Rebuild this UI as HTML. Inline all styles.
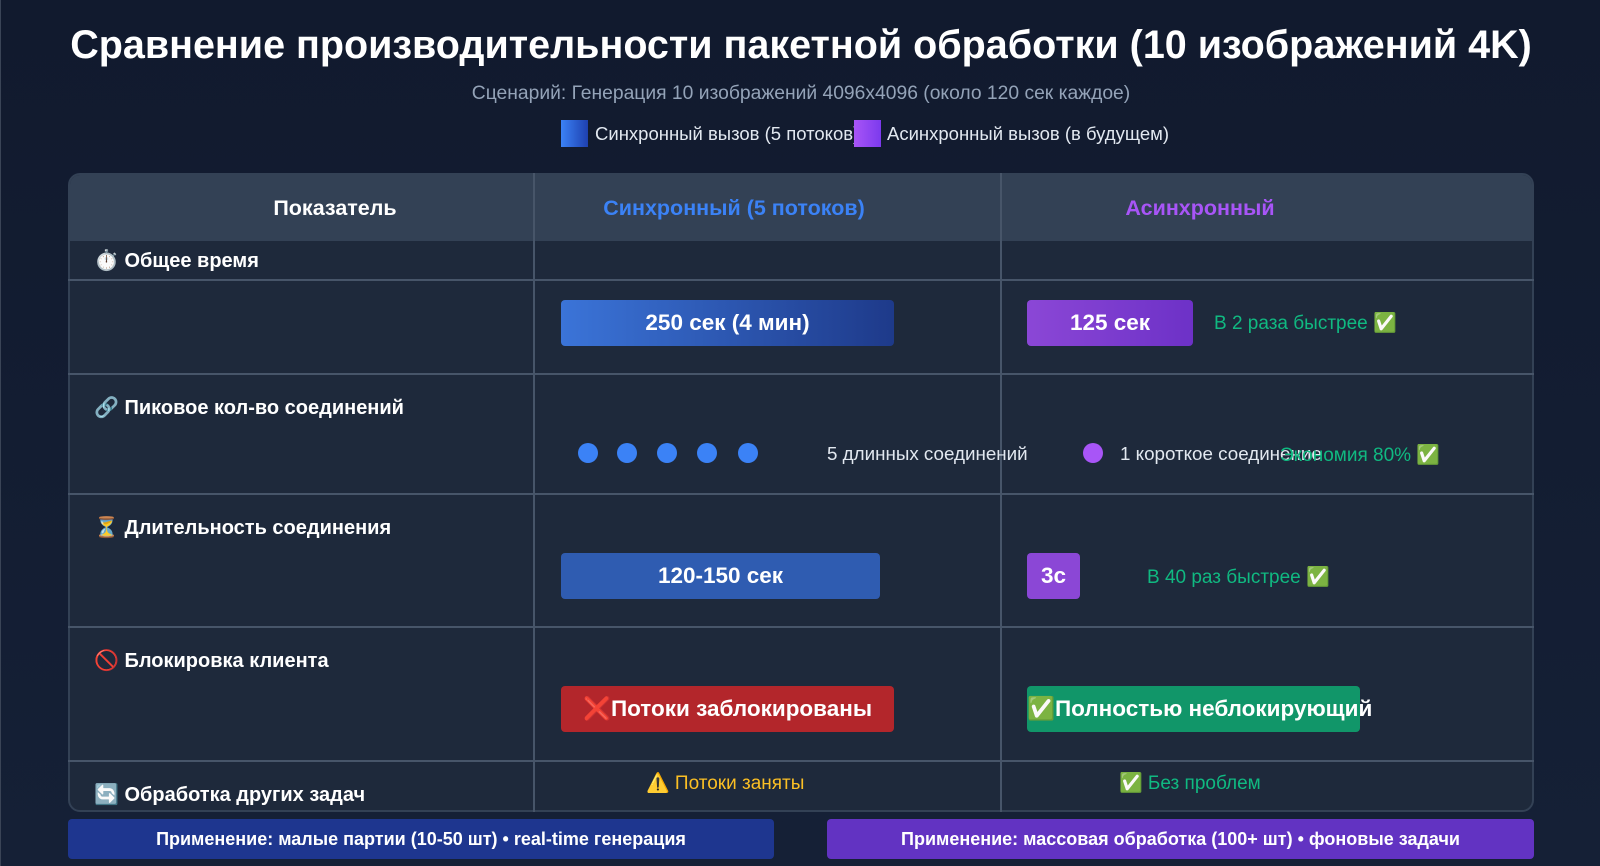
<!DOCTYPE html>
<html><head><meta charset="utf-8"><style>
*{margin:0;padding:0;box-sizing:border-box}
body{width:1600px;height:866px;overflow:hidden;background:linear-gradient(180deg,#111a2e 0%,#152036 100%);font-family:"Liberation Sans","DejaVu Sans",sans-serif;position:relative;color:#fff;border-left:1px solid #3a4456}
.a{position:absolute;white-space:nowrap}
.c{text-align:center}
.b{font-weight:bold}
.line{position:absolute;background:#475569}
.box{position:absolute;border-radius:4px;display:flex;align-items:center;justify-content:center;font-weight:bold;font-size:22.5px;color:#fff;white-space:nowrap}
.dot{position:absolute;width:20px;height:20px;border-radius:50%;background:#3b82f6}
.lab{position:absolute;left:93px;font-weight:bold;font-size:20px;white-space:nowrap}
.g{color:#10b981;font-size:19px}
</style></head><body>
<div class="a b c" style="left:0;width:1600px;top:23px;font-size:39.5px;">Сравнение производительности пакетной обработки (10 изображений 4K)</div>
<div class="a c" style="left:0;width:1600px;top:83px;font-size:19.3px;color:#94a3b8">Сценарий: Генерация 10 изображений 4096x4096 (около 120 сек каждое)</div>
<div class="a" style="left:560px;top:120px;width:27px;height:27px;background:linear-gradient(90deg,#3b82f6,#1e40af)"></div>
<div class="a" style="left:594px;top:123px;font-size:18.5px;color:#e2e8f0;width:259px;overflow:hidden">Синхронный вызов (5 потоков)</div>
<div class="a" style="left:853px;top:120px;width:27px;height:27px;background:linear-gradient(90deg,#a855f7,#7c3aed)"></div>
<div class="a" style="left:886px;top:123px;font-size:18.5px;color:#e2e8f0">Асинхронный вызов (в будущем)</div>

<div class="a" style="left:67px;top:173px;width:1466px;height:639px;background:#1e293b;border:2px solid #334155;border-radius:12px;overflow:hidden">
<div style="position:absolute;left:0;top:0;width:100%;height:66px;background:#334155"></div>
</div>
<div class="line" style="left:532px;top:173px;width:2px;height:639px"></div>
<div class="line" style="left:999px;top:173px;width:2px;height:639px"></div>
<div class="line" style="left:67px;top:279px;width:1466px;height:2px"></div>
<div class="line" style="left:67px;top:373px;width:1466px;height:2px"></div>
<div class="line" style="left:67px;top:493px;width:1466px;height:2px"></div>
<div class="line" style="left:67px;top:626px;width:1466px;height:2px"></div>
<div class="line" style="left:67px;top:760px;width:1466px;height:2px"></div>

<div class="a b c" style="left:234px;width:200px;top:196px;font-size:21.5px">Показатель</div>
<div class="a b c" style="left:533px;width:400px;top:196px;font-size:21.5px;color:#3b82f6">Синхронный (5 потоков)</div>
<div class="a b c" style="left:1049px;width:300px;top:196px;font-size:21.5px;color:#a855f7">Асинхронный</div>

<div class="lab" style="top:248px">⏱️ Общее время</div>
<div class="box" style="left:560px;top:300px;width:333px;height:46px;background:linear-gradient(90deg,#3b74d8,#1e3a8a)">250 сек (4 мин)</div>
<div class="box" style="left:1026px;top:300px;width:166px;height:46px;background:linear-gradient(90deg,#8b47d6,#6d31c7)">125 сек</div>
<div class="a g" style="left:1213px;top:311px">В 2 раза быстрее ✅</div>

<div class="lab" style="top:395px">🔗 Пиковое кол-во соединений</div>
<div class="dot" style="left:577px;top:443px"></div>
<div class="dot" style="left:616px;top:443px"></div>
<div class="dot" style="left:656px;top:443px"></div>
<div class="dot" style="left:696px;top:443px"></div>
<div class="dot" style="left:737px;top:443px"></div>
<div class="a" style="left:826px;top:443px;font-size:18.8px;color:#e2e8f0">5 длинных соединений</div>
<div class="dot" style="left:1082px;top:443px;background:#a855f7"></div>
<div class="a" style="left:1119px;top:443px;font-size:18.8px;color:#e2e8f0">1 короткое соединение</div>
<div class="a g" style="left:1279px;top:443px">Экономия 80% ✅</div>

<div class="lab" style="top:515px">⏳ Длительность соединения</div>
<div class="box" style="left:560px;top:553px;width:319px;height:46px;background:#2f5cb1">120-150 сек</div>
<div class="box" style="left:1026px;top:553px;width:53px;height:46px;background:#8b47d6">3с</div>
<div class="a g" style="left:1146px;top:565px">В 40 раз быстрее ✅</div>

<div class="lab" style="top:648px">🚫 Блокировка клиента</div>
<div class="box" style="left:560px;top:686px;width:333px;height:46px;background:#b3262b">❌Потоки заблокированы</div>
<div class="box" style="left:1026px;top:686px;width:333px;height:46px;background:#119669;justify-content:flex-start">✅Полностью неблокирующий</div>

<div class="lab" style="top:782px">🔄 Обработка других задач</div>
<div class="a" style="left:645px;top:771px;font-size:19px;color:#fbbf24">⚠️ Потоки заняты</div>
<div class="a g" style="left:1118px;top:771px">✅ Без проблем</div>

<div class="a b c" style="left:67px;top:819px;width:706px;height:40px;background:#1e368f;border-radius:4px;font-size:18px;line-height:40px">Применение: малые партии (10-50 шт) • real-time генерация</div>
<div class="a b c" style="left:826px;top:819px;width:707px;height:40px;background:#6233c2;border-radius:4px;font-size:18px;line-height:40px">Применение: массовая обработка (100+ шт) • фоновые задачи</div>
</body></html>
